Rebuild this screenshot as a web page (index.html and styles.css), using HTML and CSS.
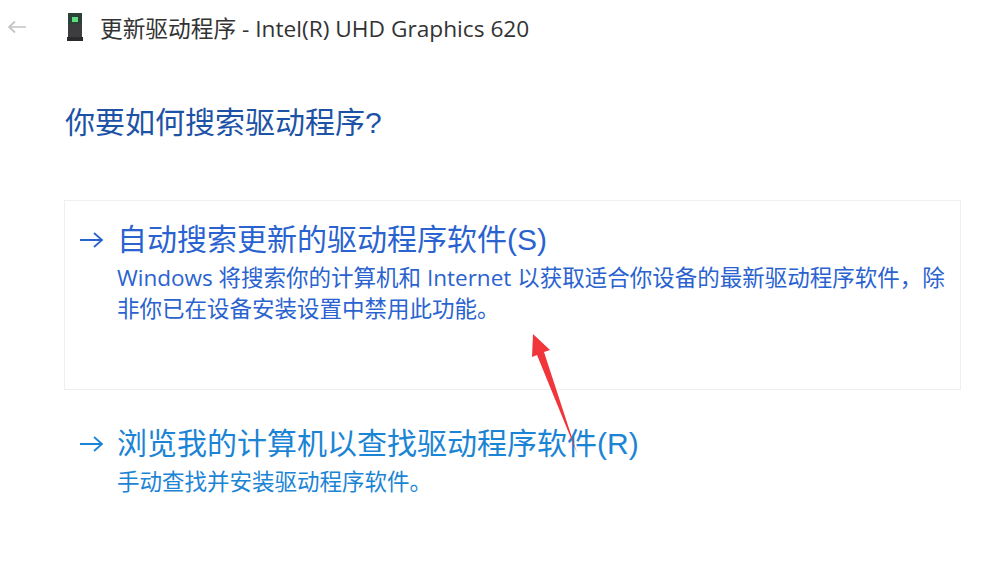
FILE: index.html
```html
<!DOCTYPE html>
<html lang="zh-CN">
<head>
  <meta charset="UTF-8">
  <title>更新驱动程序</title>
  <link rel="stylesheet" href="styles.css">
</head>
<body>
  <div class="titlebar">
    <svg class="back" width="20" height="14" viewBox="0 0 20 14"><path d="M19 7H2M8 1.5 2 7l6 5.5" fill="none" stroke="#c4c4c4" stroke-width="1.7"/></svg>
    <svg class="device" width="18" height="30" viewBox="0 0 18 30">
      <rect x="2" y="1" width="14" height="25" fill="#3d3d40"/>
      <rect x="2" y="1" width="14" height="11" fill="#2c4236"/>
      <rect x="6" y="5" width="6" height="5" fill="#5fdc80"/>
      <rect x="1" y="25" width="16" height="4" fill="#2b2b2b"/>
    </svg>
    <span class="title-text">更新驱动程序 - Intel(R) UHD Graphics 620</span>
  </div>

  <h1 class="heading">你要如何搜索驱动程序?</h1>

  <div class="option option-box">
    <div class="option-title blue">
      <svg class="arrow" width="24" height="18" viewBox="0 0 24 18"><path d="M0 9H22M14 2l8 7-8 7" fill="none" stroke="currentColor" stroke-width="1.8"/></svg>
      <span>自动搜索更新的驱动程序软件(S)</span>
    </div>
    <p class="option-desc blue">Windows 将搜索你的计算机和 Internet 以获取适合你设备的最新驱动程序软件，除非你已在设备安装设置中禁用此功能。</p>
  </div>

  <div class="option option-plain">
    <div class="option-title cyan">
      <svg class="arrow" width="24" height="18" viewBox="0 0 24 18"><path d="M0 9H22M14 2l8 7-8 7" fill="none" stroke="currentColor" stroke-width="1.8"/></svg>
      <span>浏览我的计算机以查找驱动程序软件(R)</span>
    </div>
    <p class="option-desc cyan">手动查找并安装驱动程序软件。</p>
  </div>

  <svg class="red-arrow" width="60" height="125" viewBox="0 0 60 125">
    <path d="M4 1 3 24 8 22 48 120 15 19 21 17Z" fill="#f0353b"/>
  </svg>
</body>
</html>
```

FILE: styles.css
```css
body {
  margin: 0;
  background: #fff;
  font-family: "Liberation Sans", "Noto Sans CJK SC", sans-serif;
  overflow: hidden;
}
.titlebar {
  display: flex;
  align-items: center;
  height: 54px;
  padding-left: 7px;
}
.back {
  margin-right: 39px;
}
.device {
  margin-right: 16px;
}
.title-text {
  font-family: "Open Sans", "Noto Sans CJK SC", sans-serif;
  font-size: 22.7px;
  color: #333;
}
.heading {
  margin: 0 0 0 65px;
  padding-top: 49px;
  font-size: 30px;
  line-height: 40px;
  font-weight: normal;
  color: #1c53a6;
}
.option {
  margin-left: 64px;
  width: 897px;
  box-sizing: border-box;
}
.option-box {
  margin-top: 57px;
  height: 190px;
  padding: 17px 10px 0 15px;
  border: 1px solid #efefef;
}
.option-plain {
  margin-top: 32px;
  padding: 0 10px 0 16px;
}
.option-title {
  display: flex;
  align-items: center;
  font-size: 30px;
  line-height: 44px;
}
.arrow {
  flex: none;
  margin-right: 13px;
}
.option-desc {
  margin: 0 0 0 37px;
  font-family: "Open Sans", "Noto Sans CJK SC", sans-serif;
  font-size: 22.5px;
  line-height: 31px;
}
.blue {
  color: #2a63d0;
}
.cyan {
  color: #1b84d4;
}
.red-arrow {
  position: absolute;
  left: 529px;
  top: 333px;
}
```
